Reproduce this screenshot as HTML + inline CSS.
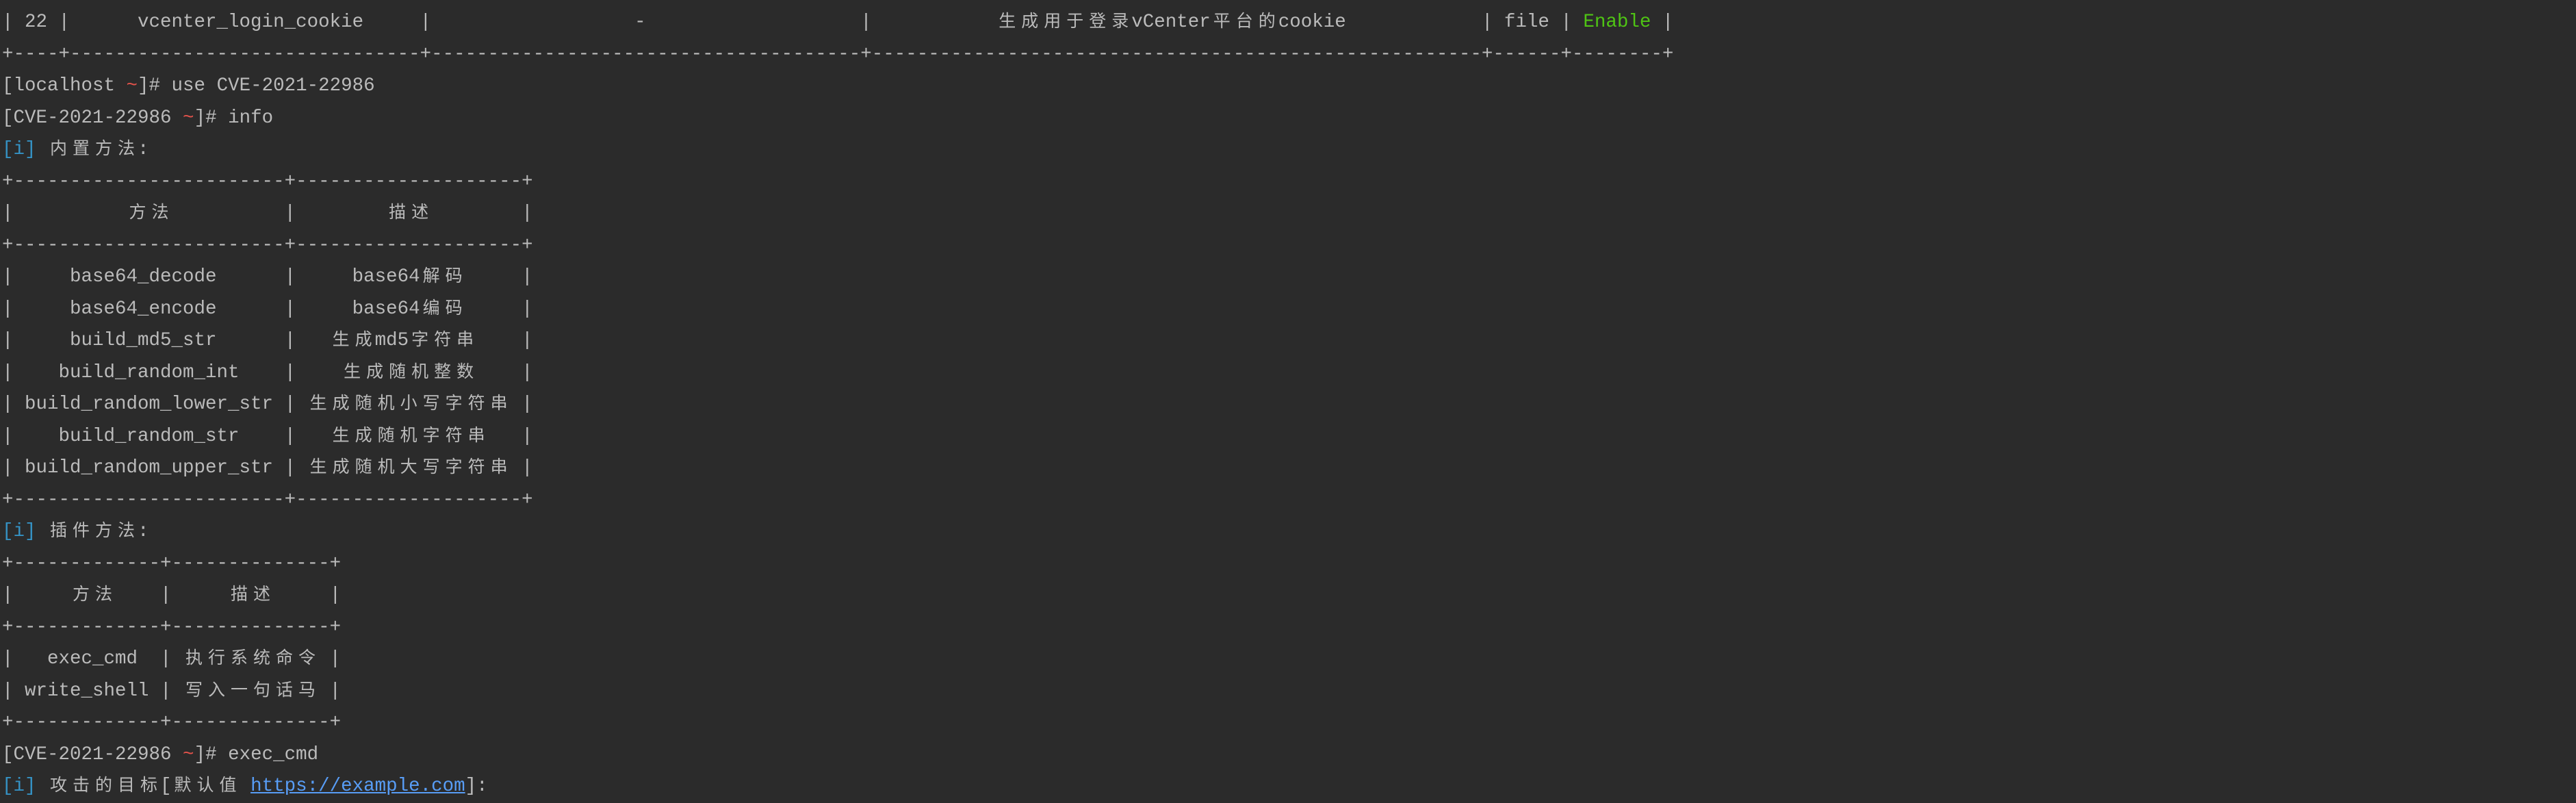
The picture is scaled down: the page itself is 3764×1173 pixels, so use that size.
<!DOCTYPE html>
<html><head><meta charset="utf-8"><style>
html,body{margin:0;padding:0;background:#2b2b2b;width:3764px;height:1170px;overflow:hidden}
pre{margin:0;position:absolute;left:3px;top:10px;font-family:"Liberation Mono","Noto Sans CJK SC",monospace;font-size:27.5px;line-height:46.5px;color:#bbbbbb;white-space:pre}
.c{display:inline-block;width:33px;text-align:center;font-family:"Noto Sans CJK SC","WenQuanYi Zen Hei",sans-serif;font-size:25px;line-height:1;vertical-align:baseline}
.r{color:#e5534b}.b{color:#3592c4}.g{color:#4fc414}
.u{color:#589df6;text-decoration:underline}
</style></head><body><pre>| 22 |      vcenter_login_cookie     |                  -                   |           <span class="c">生</span><span class="c">成</span><span class="c">用</span><span class="c">于</span><span class="c">登</span><span class="c">录</span>vCenter<span class="c">平</span><span class="c">台</span><span class="c">的</span>cookie            | file | <span class="g">Enable</span> |
+----+-------------------------------+--------------------------------------+------------------------------------------------------+------+--------+
[localhost <span class="r">~</span>]# use CVE-2021-22986
[CVE-2021-22986 <span class="r">~</span>]# info
<span class="b">[i]</span> <span class="c">内</span><span class="c">置</span><span class="c">方</span><span class="c">法</span>:
+------------------------+--------------------+
|          <span class="c">方</span><span class="c">法</span>          |        <span class="c">描</span><span class="c">述</span>        |
+------------------------+--------------------+
|     base64_decode      |     base64<span class="c">解</span><span class="c">码</span>     |
|     base64_encode      |     base64<span class="c">编</span><span class="c">码</span>     |
|     build_md5_str      |   <span class="c">生</span><span class="c">成</span>md5<span class="c">字</span><span class="c">符</span><span class="c">串</span>    |
|    build_random_int    |    <span class="c">生</span><span class="c">成</span><span class="c">随</span><span class="c">机</span><span class="c">整</span><span class="c">数</span>    |
| build_random_lower_str | <span class="c">生</span><span class="c">成</span><span class="c">随</span><span class="c">机</span><span class="c">小</span><span class="c">写</span><span class="c">字</span><span class="c">符</span><span class="c">串</span> |
|    build_random_str    |   <span class="c">生</span><span class="c">成</span><span class="c">随</span><span class="c">机</span><span class="c">字</span><span class="c">符</span><span class="c">串</span>   |
| build_random_upper_str | <span class="c">生</span><span class="c">成</span><span class="c">随</span><span class="c">机</span><span class="c">大</span><span class="c">写</span><span class="c">字</span><span class="c">符</span><span class="c">串</span> |
+------------------------+--------------------+
<span class="b">[i]</span> <span class="c">插</span><span class="c">件</span><span class="c">方</span><span class="c">法</span>:
+-------------+--------------+
|     <span class="c">方</span><span class="c">法</span>    |     <span class="c">描</span><span class="c">述</span>     |
+-------------+--------------+
|   exec_cmd  | <span class="c">执</span><span class="c">行</span><span class="c">系</span><span class="c">统</span><span class="c">命</span><span class="c">令</span> |
| write_shell | <span class="c">写</span><span class="c">入</span><span class="c">一</span><span class="c">句</span><span class="c">话</span><span class="c">马</span> |
+-------------+--------------+
[CVE-2021-22986 <span class="r">~</span>]# exec_cmd
<span class="b">[i]</span> <span class="c">攻</span><span class="c">击</span><span class="c">的</span><span class="c">目</span><span class="c">标</span>[<span class="c">默</span><span class="c">认</span><span class="c">值</span> <span class="u">https://example.com</span>]:</pre></body></html>
